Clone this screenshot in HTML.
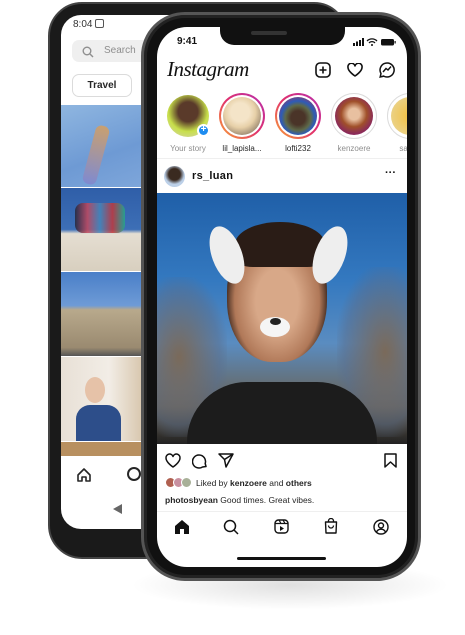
<!DOCTYPE html>
<html><head><meta charset="utf-8"><style>
*{margin:0;padding:0;box-sizing:border-box}
body{width:465px;height:635px;background:#fff;position:relative;overflow:hidden;font-family:"Liberation Sans",sans-serif}
.a{position:absolute}
.shadow{position:absolute;left:130px;top:560px;width:320px;height:50px;border-radius:50%;background:radial-gradient(ellipse,rgba(0,0,0,.12),rgba(0,0,0,0) 70%)}
.back{left:48px;top:2px;width:300px;height:557px;background:#1a1a1a;border-radius:34px;border:2px solid #444}
.bscreen{left:61px;top:15px;width:270px;height:514px;background:#fff;border-radius:20px;overflow:hidden}
.front{left:141px;top:12px;width:280px;height:569px;background:#111;border-radius:44px;border:3px solid #555;box-shadow:inset 0 0 0 3px #222}
.fscreen{left:157px;top:27px;width:250px;height:540px;background:#fff;border-radius:30px;overflow:hidden}
.ring{position:absolute;width:46px;height:46px;border-radius:50%;background:linear-gradient(45deg,#f9a533,#e1306c,#b52fb0)}
.ring i{position:absolute;left:2px;top:2px;width:42px;height:42px;border-radius:50%;background:#fff}
.ring b{position:absolute;left:4px;top:4px;width:38px;height:38px;border-radius:50%}
.lbl{position:absolute;font-size:8px;color:#262626;top:117px;width:50px;text-align:center}
svg{position:absolute}
</style></head><body>
<div class="shadow"></div>
<div class="a back"></div>
<div class="a bscreen">
 <div class="a" style="left:12px;top:4px;font-size:10px;color:#333">8:04 <span style="display:inline-block;width:9px;height:9px;border:1.3px solid #555;border-radius:2px;vertical-align:-1px"></span></div>
 <div class="a" style="left:11px;top:25px;width:100px;height:22px;background:#efefef;border-radius:7px;font-size:10px;color:#8e8e8e;padding:5px 0 0 32px">Search</div>
 <svg style="left:21px;top:31px" width="12" height="12" viewBox="0 0 12 12"><circle cx="5" cy="5" r="3.8" fill="none" stroke="#8e8e8e" stroke-width="1.4"/><path d="M8 8l3 3" stroke="#8e8e8e" stroke-width="1.4"/></svg>
 <div class="a" style="left:11px;top:59px;width:60px;height:23px;border:1px solid #dbdbdb;border-radius:7px;font-size:10px;font-weight:bold;color:#262626;text-align:center;line-height:21px">Travel</div>
 <div class="a" style="left:0;top:90px;width:80px;height:82px;background:linear-gradient(160deg,#8fb6e0,#6e9ad4 60%,#7ea6da)"></div>
 <div class="a" style="left:28px;top:110px;width:14px;height:60px;background:linear-gradient(#c9a070,#7f8ad0);transform:rotate(15deg);border-radius:6px"></div>
 <div class="a" style="left:0;top:173px;width:80px;height:83px;background:linear-gradient(#2f5ea8 0,#3d6fb6 50%,#e5ded2 55%,#d8cfbf)"></div>
 <div class="a" style="left:14px;top:188px;width:50px;height:30px;background:linear-gradient(90deg,#223,#c45,#48b,#c33,#2a8);opacity:.8;border-radius:8px"></div>
 <div class="a" style="left:0;top:257px;width:80px;height:84px;background:linear-gradient(#4a7fc8,#6e9bd6 40%,#b8a98c 45%,#9a8a70 90%,#555)"></div>
 <div class="a" style="left:0;top:342px;width:80px;height:84px;background:linear-gradient(90deg,#e8e0d6,#f2ede6 60%,#d9c8b0)"></div>
 <div class="a" style="left:15px;top:390px;width:45px;height:36px;background:#2d4e8a;border-radius:14px 14px 0 0"></div>
 <div class="a" style="left:24px;top:362px;width:20px;height:26px;background:#e6c2a8;border-radius:50%"></div>
 <div class="a" style="left:0;top:427px;width:80px;height:14px;background:#b89060"></div>
 <svg style="left:15px;top:452px" width="16" height="16" viewBox="0 0 16 16"><path d="M2 8L8 2l6 6v6h-4v-4H6v4H2z" fill="none" stroke="#262626" stroke-width="1.6" stroke-linejoin="round"/></svg>
 <div class="a" style="left:66px;top:452px;width:14px;height:14px;border:2.5px solid #262626;border-radius:50%"></div>
 <div class="a" style="left:52px;top:489px;width:0;height:0;border-top:5px solid transparent;border-bottom:5px solid transparent;border-right:9px solid #666"></div>
</div>
<div class="a front"></div>
<div class="a fscreen">
 <div class="a" style="left:63px;top:0;width:125px;height:18px;background:#111;border-radius:0 0 14px 14px"></div>
 <div class="a" style="left:94px;top:4px;width:36px;height:4px;background:#333;border-radius:2px"></div>
 <div class="a" style="left:20px;top:9px;font-size:10px;font-weight:bold;color:#111">9:41</div>
 <svg style="left:196px;top:11px" width="44" height="8" viewBox="0 0 44 8"><rect x="0" y="5" width="2" height="3" fill="#111"/><rect x="3" y="3.5" width="2" height="4.5" fill="#111"/><rect x="6" y="2" width="2" height="6" fill="#111"/><rect x="9" y="0" width="2" height="8" fill="#111"/><path d="M14 3a7 7 0 0 1 10 0M16 5a4 4 0 0 1 6 0" stroke="#111" stroke-width="1.3" fill="none"/><circle cx="19" cy="7" r="1" fill="#111"/><rect x="28" y="1" width="13" height="6.5" rx="1.5" fill="#111"/><rect x="41.5" y="3" width="1.2" height="2.5" fill="#111"/></svg>
 <div class="a" style="left:10px;top:30px;font-family:'Liberation Serif',serif;font-style:italic;font-size:21px;color:#111;letter-spacing:-.5px">Instagram</div>
 <svg style="left:158px;top:35px" width="16" height="16" viewBox="0 0 16 16"><rect x="1" y="1" width="14" height="14" rx="4" fill="none" stroke="#111" stroke-width="1.6"/><path d="M8 4.5v7M4.5 8h7" stroke="#111" stroke-width="1.6"/></svg>
 <svg style="left:190px;top:36px" width="16" height="14" viewBox="0 0 16 14"><path d="M8 13S1 8.5 1 4.5A3.5 3.5 0 0 1 8 3a3.5 3.5 0 0 1 7 1.5C15 8.5 8 13 8 13z" fill="none" stroke="#111" stroke-width="1.6" stroke-linejoin="round"/></svg>
 <svg style="left:222px;top:35px" width="16" height="16" viewBox="0 0 16 16"><path d="M8 1a7 7 0 0 0-6 10.5L1.2 15l3.5-.9A7 7 0 1 0 8 1z" fill="none" stroke="#111" stroke-width="1.5"/><path d="M4 10l3-3.5 2 1.5 3-3.5" fill="none" stroke="#111" stroke-width="1.4"/></svg>
 <div class="a" style="left:10px;top:68px;width:42px;height:42px;border-radius:50%;background:radial-gradient(circle at 50% 40%,#5a3a2a 30%,#c8e04a 60%,#d6cfc4)"></div>
 <div class="a" style="left:40px;top:97px;width:13px;height:13px;border-radius:50%;background:#1e8cf0;border:2px solid #fff;color:#fff;font-size:10px;line-height:8px;text-align:center;font-weight:bold">+</div>
 <div class="lbl" style="left:6px;color:#8e8e8e">Your story</div>
 <div class="ring" style="left:62px;top:66px"><i></i><b style="background:radial-gradient(circle at 45% 40%,#f4e4c8 30%,#e7d0a8 50%,#5a4a40)"></b></div>
 <div class="lbl" style="left:60px">lil_lapisla...</div>
 <div class="ring" style="left:118px;top:66px"><i></i><b style="background:radial-gradient(circle at 50% 55%,#4a3428 25%,#5e6a4a 45%,#2d5bb8 60%,#d23)"></b></div>
 <div class="lbl" style="left:116px">lofti232</div>
 <div class="a" style="left:174px;top:66px;width:46px;height:46px;border-radius:50%;border:1px solid #dbdbdb"></div>
 <div class="a" style="left:178px;top:70px;width:38px;height:38px;border-radius:50%;background:radial-gradient(circle at 50% 45%,#e8c0a0 20%,#a0502a 45%,#8a2a5a 70%,#c04080)"></div>
 <div class="lbl" style="left:172px;color:#8e8e8e">kenzoere</div>
 <div class="a" style="left:230px;top:66px;width:46px;height:46px;border-radius:50%;border:1px solid #dbdbdb"></div>
 <div class="a" style="left:234px;top:70px;width:38px;height:38px;border-radius:50%;background:radial-gradient(#f2c040,#e8d8a0)"></div>
 <div class="lbl" style="left:226px;color:#8e8e8e">sapp</div>
 <div class="a" style="left:0;top:131px;width:250px;height:1px;background:#efefef"></div>
 <div class="a" style="left:7px;top:139px;width:21px;height:21px;border-radius:50%;background:radial-gradient(circle at 50% 40%,#3a2a20 35%,#bcd0e8 60%)"></div>
 <div class="a" style="left:35px;top:143px;font-size:11px;font-weight:bold;color:#111;letter-spacing:.3px">rs_luan</div>
 <div class="a" style="left:228px;top:140px;font-size:11px;font-weight:bold;color:#111">···</div>
 <div class="a" style="left:0;top:166px;width:250px;height:251px;background:linear-gradient(180deg,#1f5fa8 0%,#3479c0 35%,#5a8cc0 60%,#6a6050 85%,#222 100%)"></div>
 <div class="a" style="left:-10px;top:250px;width:80px;height:160px;background:radial-gradient(ellipse at 40% 50%,#7a6a5a,rgba(90,110,140,.5) 60%,transparent 75%)"></div>
 <div class="a" style="left:180px;top:240px;width:80px;height:170px;background:radial-gradient(ellipse at 60% 50%,#7a6a5a,rgba(90,110,140,.5) 60%,transparent 75%)"></div>
 <div class="a" style="left:70px;top:200px;width:100px;height:135px;border-radius:48% 48% 45% 45%;background:radial-gradient(ellipse at 50% 55%,#d8a888 30%,#b07858 60%,#2a1a14 75%)"></div>
 <div class="a" style="left:78px;top:195px;width:90px;height:45px;border-radius:50% 50% 20% 20%;background:#2a1c16"></div>
 <div class="a" style="left:55px;top:198px;width:30px;height:60px;border-radius:50%;background:#eee;transform:rotate(-20deg)"></div>
 <div class="a" style="left:158px;top:198px;width:30px;height:60px;border-radius:50%;background:#eee;transform:rotate(20deg)"></div>
 <div class="a" style="left:103px;top:290px;width:30px;height:20px;border-radius:50%;background:#f5f5f5"></div>
 <div class="a" style="left:113px;top:291px;width:11px;height:7px;border-radius:50%;background:#222"></div>
 <div class="a" style="left:30px;top:355px;width:190px;height:62px;border-radius:60px 60px 0 0;background:#1c1c1c"></div>
 <svg style="left:8px;top:426px" width="16" height="15" viewBox="0 0 16 15"><path d="M8 14S1 9.5 1 5A3.6 3.6 0 0 1 8 3.5 3.6 3.6 0 0 1 15 5c0 4.5-7 9-7 9z" fill="none" stroke="#111" stroke-width="1.5" stroke-linejoin="round"/></svg>
 <svg style="left:35px;top:426px" width="16" height="16" viewBox="0 0 16 16"><path d="M14 13.5l-.8-3A6.5 6.5 0 1 0 10.5 14z" fill="none" stroke="#111" stroke-width="1.5" stroke-linejoin="round"/></svg>
 <svg style="left:61px;top:426px" width="16" height="15" viewBox="0 0 16 15"><path d="M1 1h14L8 14 6.5 6.5zM6.5 6.5L15 1" fill="none" stroke="#111" stroke-width="1.5" stroke-linejoin="round"/></svg>
 <svg style="left:227px;top:426px" width="13" height="15" viewBox="0 0 13 15"><path d="M1 1h11v13l-5.5-5L1 14z" fill="none" stroke="#111" stroke-width="1.5" stroke-linejoin="round"/></svg>
 <div class="a" style="left:8px;top:450px;width:11px;height:11px;border-radius:50%;background:#b06050;border:1px solid #fff"></div>
 <div class="a" style="left:16px;top:450px;width:11px;height:11px;border-radius:50%;background:#c890a0;border:1px solid #fff"></div>
 <div class="a" style="left:24px;top:450px;width:11px;height:11px;border-radius:50%;background:#a8b098;border:1px solid #fff"></div>
 <div class="a" style="left:39px;top:451px;font-size:8.5px;color:#262626">Liked by <b>kenzoere</b> and <b>others</b></div>
 <div class="a" style="left:8px;top:468px;font-size:8.5px;color:#262626"><b>photosbyean</b> Good times. Great vibes.</div>
 <div class="a" style="left:0;top:484px;width:250px;height:1px;background:#efefef"></div>
 <svg style="left:17px;top:492px" width="16" height="15" viewBox="0 0 16 15"><path d="M1 7L8 1l7 6v8h-5v-5H6v5H1z" fill="#111"/></svg>
 <svg style="left:66px;top:492px" width="16" height="16" viewBox="0 0 16 16"><circle cx="7" cy="7" r="5.5" fill="none" stroke="#111" stroke-width="1.5"/><path d="M11 11l4 4" stroke="#111" stroke-width="1.5"/></svg>
 <svg style="left:117px;top:492px" width="15" height="15" viewBox="0 0 15 15"><rect x="1" y="1" width="13" height="13" rx="3.5" fill="none" stroke="#111" stroke-width="1.4"/><path d="M1 4.5h13M5 1l2 3.5M9 1l2 3.5" stroke="#111" stroke-width="1.2"/><path d="M6 7v5l4-2.5z" fill="#111"/></svg>
 <svg style="left:167px;top:491px" width="14" height="16" viewBox="0 0 14 16"><path d="M1.5 4h11l-.5 11H2z" fill="none" stroke="#111" stroke-width="1.4" stroke-linejoin="round"/><path d="M4.5 4V3a2.5 2.5 0 0 1 5 0v1M4.5 7.5a2.5 2.5 0 0 0 5 0" fill="none" stroke="#111" stroke-width="1.3"/></svg>
 <svg style="left:216px;top:492px" width="16" height="16" viewBox="0 0 16 16"><circle cx="8" cy="8" r="7" fill="none" stroke="#111" stroke-width="1.4"/><circle cx="8" cy="6.5" r="2.5" fill="none" stroke="#111" stroke-width="1.4"/><path d="M3.5 13a5 5 0 0 1 9 0" fill="none" stroke="#111" stroke-width="1.4"/></svg>
 <div class="a" style="left:80px;top:530px;width:89px;height:3px;border-radius:2px;background:#111"></div>
</div>
</body></html>
